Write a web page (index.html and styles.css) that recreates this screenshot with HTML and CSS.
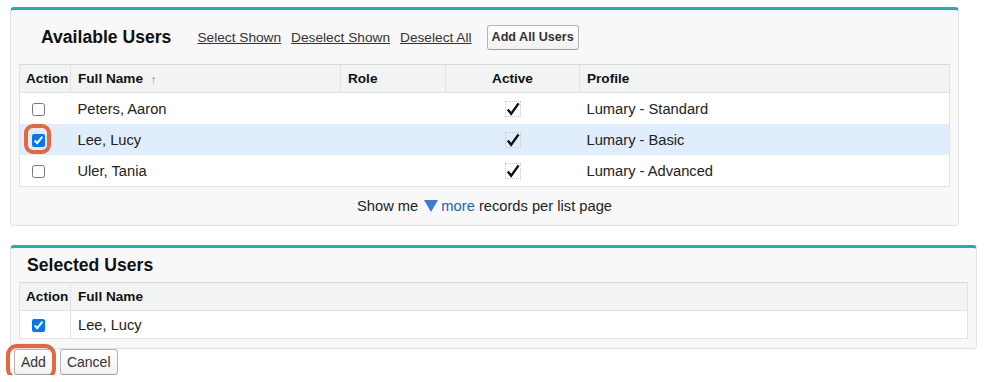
FILE: index.html
```html
<!DOCTYPE html>
<html lang="en">
<head>
    <meta charset="UTF-8">
    <title>Add Users</title>
    <link rel="stylesheet" href="styles.css">
</head>
<body>

<!-- Available users -->
<div class="panel panel-available">
    <div class="panel-header">
        <h2 class="panel-title">Available Users</h2>
        <div class="panel-links">
            <a href="#">Select Shown</a>
            <a href="#">Deselect Shown</a>
            <a href="#">Deselect All</a>
        </div>
        <button class="btn btn-bold">Add All Users</button>
    </div>

    <table class="list">
        <thead>
            <tr>
                <th class="col-action">Action</th>
                <th class="col-name">Full Name <span class="sort">&#8593;</span></th>
                <th class="col-role">Role</th>
                <th class="col-active">Active</th>
                <th>Profile</th>
            </tr>
        </thead>
        <tbody>
            <tr>
                <td class="col-action"><input type="checkbox"></td>
                <td>Peters, Aaron</td>
                <td></td>
                <td class="col-active"><span class="check-img"><svg width="16" height="16" viewBox="0 0 16 16"><path d="M2.8 8.6 L6.2 12.8 L13.6 2.4" fill="none" stroke="#111" stroke-width="2.4"/></svg></span></td>
                <td>Lumary - Standard</td>
            </tr>
            <tr class="selected">
                <td class="col-action">
                    <span class="mark mark-box"></span>
                    <input type="checkbox" checked>
                </td>
                <td>Lee, Lucy</td>
                <td></td>
                <td class="col-active"><span class="check-img"><svg width="16" height="16" viewBox="0 0 16 16"><path d="M2.8 8.6 L6.2 12.8 L13.6 2.4" fill="none" stroke="#111" stroke-width="2.4"/></svg></span></td>
                <td>Lumary - Basic</td>
            </tr>
            <tr class="last">
                <td class="col-action"><input type="checkbox"></td>
                <td>Uler, Tania</td>
                <td></td>
                <td class="col-active"><span class="check-img"><svg width="16" height="16" viewBox="0 0 16 16"><path d="M2.8 8.6 L6.2 12.8 L13.6 2.4" fill="none" stroke="#111" stroke-width="2.4"/></svg></span></td>
                <td>Lumary - Advanced</td>
            </tr>
        </tbody>
    </table>

    <div class="panel-footer">
        Show me <span class="tri"></span><a href="#" class="more">more</a> records per list page
    </div>
</div>

<!-- Selected users -->
<div class="panel panel-selected">
    <div class="panel-header small">
        <h2 class="panel-title">Selected Users</h2>
    </div>
    <table class="list bordered">
        <thead>
            <tr>
                <th class="col-action">Action</th>
                <th>Full Name</th>
            </tr>
        </thead>
        <tbody>
            <tr class="last">
                <td class="col-action"><input type="checkbox" checked></td>
                <td>Lee, Lucy</td>
            </tr>
        </tbody>
    </table>
</div>

<div class="actions">
    <span class="add-wrap">
        <span class="mark mark-btn"></span>
        <button class="btn">Add</button>
    </span>
    <button class="btn">Cancel</button>
</div>

</body>
</html>
```

FILE: styles.css
```css
body {
    font-family: "Liberation Sans", Arial, sans-serif;
    margin: 0;
    padding: 7px 0 0 10px;
    background-color: #fff;
    color: #000;
}

.panel {
    background-color: #f8f8f8;
    border: 1px solid #e0e3e5;
    border-top: 3px solid #1eafb7;
    border-radius: 4px;
    box-sizing: border-box;
    padding: 0 8px;
}

.panel-available {
    width: 949px;
}

.panel-selected {
    width: 967px;
    margin-top: 19px;
    padding-bottom: 9px;
}

.panel-header {
    display: flex;
    align-items: center;
    height: 54px;
    padding-left: 22px;
}

.panel-header.small {
    height: 34px;
    padding-left: 8px;
}

.panel-title {
    font-size: 17.6px;
    font-weight: bold;
    margin: 0 26px 0 0;
    color: #111;
}

.panel-links {
    display: flex;
    gap: 10px;
    font-size: 13.7px;
    margin-right: 15px;
}

.panel-links a {
    color: #333;
    text-decoration: underline;
}

.btn {
    font-family: "Liberation Sans", Arial, sans-serif;
    font-size: 14px;
    color: #333;
    background: linear-gradient(#ffffff, #f1f1f1);
    border: 1px solid #b5b5b5;
    border-bottom-color: #9f9f9f;
    border-radius: 3px;
    padding: 0 6px;
    height: 26px;
    cursor: pointer;
}

.btn-bold {
    font-weight: bold;
    font-size: 12.6px;
    height: 25px;
    padding: 0 4px;
}

/* Таблицы */
.list {
    width: 100%;
    border-collapse: collapse;
    background-color: #fff;
    border: 1px solid #e0e3e5;
    font-size: 14.7px;
    table-layout: fixed;
}

.list th {
    background-color: #f2f3f3;
    border-top: 1px solid #d4dadc;
    border-bottom: 1px solid #e0e3e5;
    border-left: 1px solid #e0e3e5;
    font-size: 13.6px;
    font-weight: bold;
    text-align: left;
    height: 27px;
    padding: 0 7px;
    white-space: nowrap;
    color: #111;
}

.list th:first-child {
    border-left: none;
}

.list td {
    height: 31px;
    padding: 0 7px;
    color: #222;
}

.list tr.last td {
    border-bottom: 1px solid #e0e3e5;
}

.list tr.selected td {
    background-color: #e0edfc;
}

.list .col-action {
    width: 44px;
    padding: 0 0 0 6px;
    position: relative;
}

.list .col-name {
    width: 255px;
}

.list .col-role {
    width: 90px;
}

.list .col-active {
    width: 119px;
    text-align: center;
}

.list td.col-action input {
    margin: 0 0 0 6px;
    width: 13px;
    height: 13px;
    vertical-align: middle;
}

.bordered td + td {
    border-left: 1px solid #e0e3e5;
}

.bordered td {
    height: 27px;
}

.sort {
    color: #777;
    font-size: 11px;
    margin-left: 4px;
}

.check-img {
    display: inline-block;
    width: 16px;
    height: 16px;
    outline: 1px dotted #c8c8c8;
    outline-offset: -1px;
    vertical-align: middle;
}

.check-img svg {
    display: block;
}

.panel-footer {
    height: 38px;
    line-height: 38px;
    text-align: center;
    font-size: 14.7px;
    color: #222;
}

.tri {
    display: inline-block;
    width: 0;
    height: 0;
    border-left: 7px solid transparent;
    border-right: 7px solid transparent;
    border-top: 12px solid #3f7bd0;
    margin: 0 3px 0 2px;
    vertical-align: -1px;
}

.more {
    color: #1966b4;
    text-decoration: none;
}

.actions {
    display: flex;
    gap: 7px;
    margin-top: 0;
    padding-left: 4px;
}

.add-wrap {
    position: relative;
    display: inline-block;
}

/* Оранжевые выделения */
.mark {
    position: absolute;
    border: 4px solid #e4673d;
    border-radius: 9px;
    box-sizing: border-box;
    pointer-events: none;
}

.mark-box {
    left: 4px;
    top: 0;
    width: 27px;
    height: 30px;
}

.mark-btn {
    left: -8px;
    top: -5px;
    width: 50px;
    height: 36px;
    border-radius: 11px;
}
```
